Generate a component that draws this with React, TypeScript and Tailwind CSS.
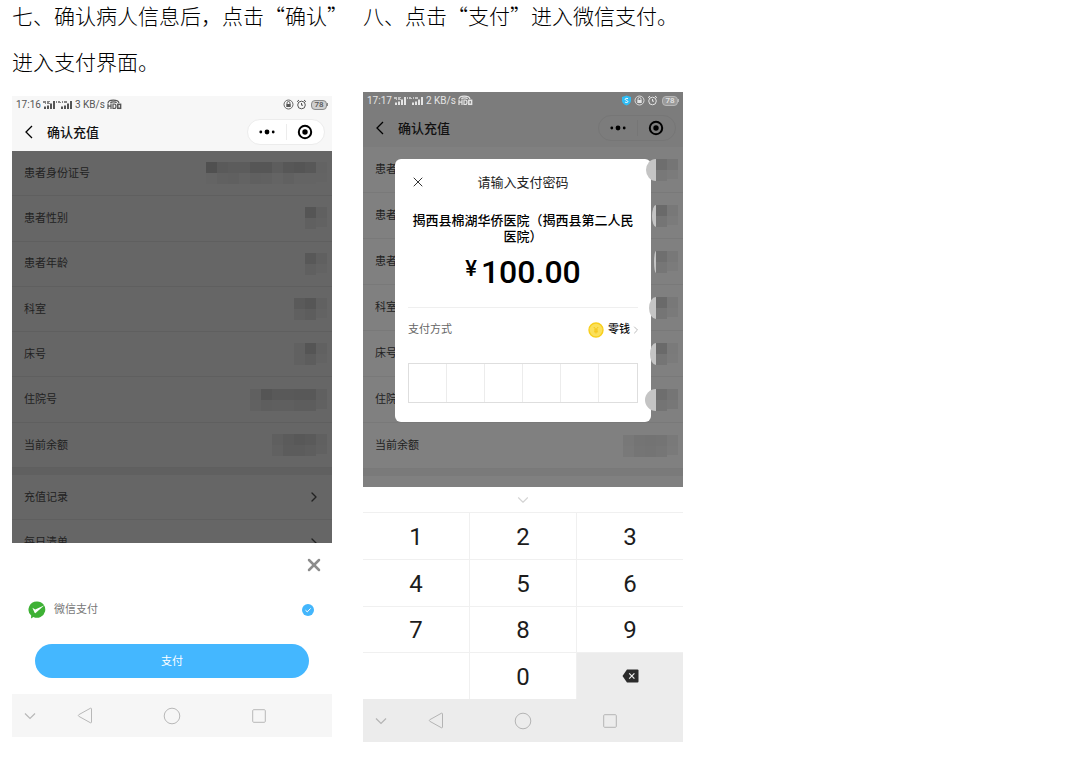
import { useState } from 'react';
import { ChevronDown, ChevronRight, X } from 'lucide-react';

interface MosaicProps {
  top: string[];
  bottom: string[];
  glow?: number;
}

interface InfoRow extends MosaicProps {
  label: string;
}

const CELL = 11;

// 患者信息打码块
function Mosaic({ top, bottom, glow = 0 }: MosaicProps) {
  const width = top.length * CELL + glow;
  return (
    <svg width={width} height={22} viewBox={`0 0 ${width} 22`} className="relative z-20 shrink-0" aria-hidden="true">
      {glow > 0 && <path d={`M${glow} 0 A${glow} 11 0 0 0 ${glow} 22 Z`} fill="#c4c4c4" />}
      {top.map((c, i) => (
        <rect key={`t${i}`} x={glow + i * CELL} y={0} width={CELL} height={11} fill={c} />
      ))}
      {bottom.map((c, i) => (
        <rect key={`b${i}`} x={glow + i * CELL} y={11} width={CELL} height={i === bottom.length - 1 ? 9 : 11} fill={c} />
      ))}
    </svg>
  );
}

const confirmRows: InfoRow[] = [
  {
    label: '患者身份证号',
    top: ['#505050', '#5a5a5a', '#5c5c5c', '#5c5c5c', '#565656', '#565656', '#5d5d5d', '#575757', '#555555', '#585858', '#636363'],
    bottom: ['#646464', '#616161', '#606060', '#636363', '#606060', '#616161', '#646464', '#616161', '#646464', '#646464', '#646464'],
  },
  { label: '患者性别', top: ['#555555', '#606060'], bottom: ['#606060', '#626262'] },
  { label: '患者年龄', top: ['#585858', '#606060'], bottom: ['#606060', '#636363'] },
  { label: '科室', top: ['#5a5a5a', '#565656', '#616161'], bottom: ['#606060', '#5d5d5d', '#636363'] },
  { label: '床号', top: ['#616161', '#555555', '#616161'], bottom: ['#616161', '#5d5d5d', '#636363'] },
  {
    label: '住院号',
    top: ['#606060', '#555555', '#595959', '#595959', '#585858', '#585858', '#606060'],
    bottom: ['#616161', '#5e5e5e', '#5f5f5f', '#5f5f5f', '#5d5d5d', '#5d5d5d', '#616161'],
  },
  {
    label: '当前余额',
    top: ['#5f5f5f', '#5b5b5b', '#585858', '#5a5a5a', '#606060'],
    bottom: ['#616161', '#5c5c5c', '#5c5c5c', '#5e5e5e', '#616161'],
  },
];

const payRows: InfoRow[] = [
  { label: '患者身份证号', glow: 10, top: ['#6e6e6e', '#757575'], bottom: ['#787878', '#7b7b7b'] },
  { label: '患者性别', glow: 4, top: ['#6a6a6a', '#787878'], bottom: ['#757575', '#7b7b7b'] },
  { label: '患者年龄', glow: 2, top: ['#6f6f6f', '#787878'], bottom: ['#767676', '#7b7b7b'] },
  { label: '科室', glow: 7, top: ['#6a6a6a', '#787878'], bottom: ['#757575', '#7a7a7a'] },
  { label: '床号', glow: 6, top: ['#6a6a6a', '#7a7a7a'], bottom: ['#757575', '#7b7b7b'] },
  { label: '住院号', glow: 11, top: ['#6e6e6e', '#757575'], bottom: ['#747474', '#777777'] },
  {
    label: '当前余额',
    top: ['#787878', '#747474', '#737373', '#747474', '#797979'],
    bottom: ['#797979', '#757575', '#747474', '#767676', '#7a7a7a'],
  },
];

function SignalBars() {
  return (
    <svg width="30" height="10" viewBox="0 0 30 10" fill="currentColor" aria-hidden="true">
      <path d="M0 1h3v3h-1v-1h-2zM4 1h3v1h-1v1h1v1h-3zM13 1h1v2h-1zM15 1h2v1h1v1h-3zM19 1h1v2h-1zM21 1h3v2h-3z" opacity=".7" />
      <path d="M1 6.500h2v2.500h-2zM4 5.500h2v3.500h-2zM7 3.500h2v5.500h-2zM10 1h2v8h-2z" />
      <path d="M18 6.500h2v2.500h-2zM21 5.500h2v3.500h-2zM24 3.500h2v5.500h-2zM27 1h2v8h-2z" />
    </svg>
  );
}

function HdIcon() {
  return (
    <svg width="15" height="11" viewBox="0 0 15 11" fill="none" stroke="currentColor" aria-hidden="true">
      <path d="M1 4C1.500 .2 11 .2 12 4M3.500 4C4 2.600 9 2.600 9.500 4" strokeWidth="1.200" />
      <path d="M1 4.500v5.500M4 4.500v5.500M1 7.200h3M6 5v4.500h1.200c2.400 0 2.400-4.500 0-4.500z" strokeWidth="1.200" />
      <rect x="10.800" y="5.300" width="2.800" height="4" strokeWidth="1.500" />
    </svg>
  );
}

function StatusBar({ time, speed, shield }: { time: string; speed: string; shield?: boolean }) {
  return (
    <div className="flex h-[17px] items-center justify-between px-1 text-[10px] leading-4">
      <div className="flex items-center gap-0.5">
        <span>{time}</span>
        <SignalBars />
        <span>{speed}</span>
        <HdIcon />
      </div>
      <div className="flex items-center gap-0.5">
        {shield && (
          <svg width="11" height="11" viewBox="0 0 11 11" aria-hidden="true">
            <path d="M5.500 .5L10 2v3.500c0 2.400-2 4-4.500 5C3 9.500 1 7.900 1 5.500V2z" fill="#2fbdf5" />
            <path d="M7 3.700C5.500 3 4 3.500 4.200 4.500S7 5.400 6.900 6.600 4.800 7.700 4 7" fill="none" stroke="#fff" />
          </svg>
        )}
        <svg width="11" height="11" viewBox="0 0 11 11" fill="none" stroke="currentColor" aria-hidden="true">
          <circle cx="5.500" cy="5.500" r="4.500" strokeWidth=".9" />
          <path d="M4 5V4a1.500 1.500 0 0 1 3 0v1" strokeWidth=".9" />
          <rect x="3.300" y="5" width="4.400" height="3" fill="currentColor" stroke="none" />
        </svg>
        <svg width="11" height="11" viewBox="0 0 11 11" fill="none" stroke="currentColor" aria-hidden="true">
          <circle cx="5.500" cy="6" r="3.800" />
          <path d="M5.500 4v2.200H7M1 2.800L3 1M10 2.800L8 1" />
        </svg>
        <span className="ml-0.5 flex items-center">
          <span
            className={
              shield
                ? 'flex h-2.5 w-4 items-center justify-center rounded-[4px] border border-[#b8b8b8] bg-[#9a9a9a] text-[8px] font-medium leading-none'
                : 'flex h-2.5 w-4 items-center justify-center rounded-[4px] border border-[#8a8a8a] bg-[#cfcfcf] text-[8px] font-medium leading-none'
            }
          >
            78
          </span>
          <span className={shield ? 'h-[3px] w-px bg-[#b8b8b8]' : 'h-[3px] w-px bg-[#8a8a8a]'} />
        </span>
      </div>
    </div>
  );
}

function NavHeader({ dim }: { dim?: boolean }) {
  return (
    <div className="flex h-[38px] items-center pl-3 pr-[7px] text-black">
      <button type="button" aria-label="返回" className="flex w-[23px] items-center">
        <svg width="10" height="14" viewBox="0 0 10 14" fill="none" stroke="currentColor" strokeWidth="1.300">
          <path d="M8 1L2 7l6 6" />
        </svg>
      </button>
      <h3 className="flex-1 pt-0.5 text-[13px] font-medium leading-5 text-[#111]">确认充值</h3>
      <div
        className={
          dim
            ? 'flex h-[26px] w-[78px] items-center rounded-full border border-[#767676]'
            : 'flex h-[26px] w-[78px] items-center rounded-full border border-[#ececec] bg-white'
        }
      >
        <button type="button" aria-label="更多" className="flex flex-1 justify-center">
          <svg width="16" height="6" viewBox="0 0 16 6" fill="currentColor">
            <circle cx="1.800" cy="3" r="1.400" />
            <circle cx="8" cy="3" r="2.400" />
            <circle cx="14.200" cy="3" r="1.400" />
          </svg>
        </button>
        <span className={dim ? 'h-4 w-px bg-[#767676]' : 'h-4 w-px bg-[#ececec]'} />
        <button type="button" aria-label="关闭小程序" className="flex flex-1 justify-center">
          <svg width="16" height="16" viewBox="0 0 16 16" fill="none" stroke="currentColor" strokeWidth="2">
            <circle cx="8" cy="8" r="6.200" />
            <circle cx="8" cy="8" r="2.700" fill="currentColor" stroke="none" />
          </svg>
        </button>
      </div>
    </div>
  );
}

function SystemNav({ dark }: { dark?: boolean }) {
  return (
    <div
      className={
        dark
          ? 'grid h-[43px] grid-cols-[36px_74px_100px_74px] place-items-center bg-[#ececec] text-[#b4b4b4]'
          : 'grid h-[43px] grid-cols-[36px_74px_100px_74px] place-items-center bg-[#f6f6f6] text-[#b8b8b8]'
      }
    >
      <button type="button" aria-label="收起">
        <svg width="12" height="8" viewBox="0 0 12 8" fill="none" stroke="currentColor" strokeWidth="1.200">
          <path d="M1 1.500l5 5 5-5" />
        </svg>
      </button>
      <button type="button" aria-label="返回">
        <svg width="16" height="17" viewBox="0 0 16 17" fill="none" stroke="currentColor">
          <path d="M13.500 1.200L1.800 7.700q-1 .8 0 1.600L13.500 15.800q1 .2 1-.8V2q0-1-1-.8z" />
        </svg>
      </button>
      <button type="button" aria-label="主页">
        <svg width="18" height="18" viewBox="0 0 18 18" fill="none" stroke="currentColor">
          <circle cx="9" cy="9" r="7.800" />
        </svg>
      </button>
      <button type="button" aria-label="最近任务">
        <svg width="14" height="14" viewBox="0 0 14 14" fill="none" stroke="currentColor">
          <rect x=".7" y=".7" width="12.600" height="12.600" rx="1" />
        </svg>
      </button>
    </div>
  );
}

function ConfirmPhone() {
  return (
    <div className="bg-white">
      <div className="bg-[#f7f7f7] text-[#555]">
        <StatusBar time="17:16" speed="3 KB/s" />
        <NavHeader />
      </div>

      <div className="bg-[#666] text-[11px] text-[#222]">
        <ul className="flex h-[317px] flex-col">
          {confirmRows.map((row) => (
            <li key={row.label} className="flex flex-1 items-center justify-between border-b border-[#5f5f5f] pl-3 pr-[5px]">
              <span className="pt-0.5">{row.label}</span>
              <Mosaic top={row.top} bottom={row.bottom} />
            </li>
          ))}
        </ul>
        <div className="h-[7px] bg-[#606060]" />
        <a href="#records" className="flex h-[45px] items-center justify-between border-b border-[#5f5f5f] pl-3 pr-2.5">
          <span className="pt-0.5">充值记录</span>
          <ChevronRight size={16} strokeWidth={2} />
        </a>
        {/* 被支付面板遮住一半 */}
        <div className="h-[23px] overflow-hidden">
          <a href="#daily" className="flex h-[45px] items-center justify-between pl-3 pr-2.5">
            <span className="pt-0.5">每日清单</span>
            <ChevronRight size={16} strokeWidth={2} />
          </a>
        </div>
      </div>

      {/* 支付面板 */}
      <div className="bg-white pb-4">
        <div className="flex h-[43px] items-center justify-end pr-2">
          <button type="button" aria-label="关闭" className="text-[#8c8c8c]">
            <X size={20} strokeWidth={3} />
          </button>
        </div>
        <label className="flex h-[47px] items-center gap-2 pl-4 pr-[18px] text-[11px] text-[#777]">
          <svg width="18" height="18" viewBox="0 0 18 18" aria-hidden="true">
            <path d="M9.200 .4a8.300 8.200 0 1 1-3.800 15.600L3 17.600 3.200 14.600A8.300 8.200 0 0 1 9.200 .4z" fill="#3eb135" />
            <path d="M4.400 6.700l2.800 1.700L16.400 4.300 7.600 12q-.7.500-1-.3z" fill="#fff" />
          </svg>
          <span className="flex-1 pt-0.5">微信支付</span>
          <input type="radio" name="pay" defaultChecked className="sr-only" />
          <svg width="12" height="12" viewBox="0 0 12 12" fill="none" aria-hidden="true">
            <circle cx="6" cy="6" r="6" fill="#43b6fc" />
            <path d="M3.500 6.200l1.800 1.700 3.300-3.500" stroke="#fff" />
          </svg>
        </label>
        <div className="px-[23px] pt-[11px]">
          <button type="button" className="h-[34px] w-full rounded-full bg-[#44b7ff] pt-0.5 text-[11px] text-white">
            支付
          </button>
        </div>
      </div>
      <SystemNav />
    </div>
  );
}

function PasswordModal() {
  return (
    <div className="absolute inset-x-8 top-[67px] z-10 rounded-md bg-white px-[13px] pb-[19px] text-black">
      <div className="grid h-[46px] grid-cols-[20px_1fr_20px] items-center">
        <button type="button" aria-label="关闭" className="flex justify-center text-[#333]">
          <X size={16} strokeWidth={1.5} />
        </button>
        <h4 className="pt-0.5 text-center text-[13px] leading-5 text-[#222]">请输入支付密码</h4>
      </div>
      <p className="pt-2 text-center text-[13px] font-medium leading-4">揭西县棉湖华侨医院（揭西县第二人民医院）</p>
      <p className="flex h-[63px] items-center justify-center gap-1 border-b border-[#efefef] pb-2 font-medium">
        <span className="pb-1.5 text-[22px] leading-none">¥</span>
        <span className="text-[32px] leading-none">100.00</span>
      </p>
      <div className="flex h-[43px] items-center text-[11px]">
        <span className="flex-1 pt-0.5 text-[#666]">支付方式</span>
        <button type="button" className="flex items-center gap-1 font-medium text-[#111]">
          <svg width="16" height="16" viewBox="0 0 16 16" fill="none" aria-hidden="true">
            <circle cx="8" cy="8" r="7" fill="#fbe05a" stroke="#f8cf1c" strokeWidth="1.400" />
            <path d="M5.800 5L8 7.500 10.200 5M8 7.500V11.500M6 8h4M6 9.800h4" stroke="#f5c518" />
          </svg>
          <span className="pt-0.5">零钱</span>
          <ChevronRight size={12} strokeWidth={2} className="-mx-1 text-[#bbb]" />
        </button>
      </div>
      <div className="mt-3 grid h-10 grid-cols-6 divide-x divide-[#ececec] border border-[#dedede]">
        {[1, 2, 3, 4, 5, 6].map((n) => (
          <input key={n} type="password" maxLength={1} aria-label={`密码第${n}位`} className="w-full min-w-0 text-center outline-none" />
        ))}
      </div>
    </div>
  );
}

function Keypad() {
  const [, setCode] = useState('');
  const keys = ['1', '2', '3', '4', '5', '6', '7', '8', '9', '', '0'];

  return (
    <div className="bg-white">
      <button type="button" aria-label="收起键盘" className="flex h-[25px] w-full items-center justify-center text-[#d4d4d4]">
        <ChevronDown size={18} strokeWidth={1.5} />
      </button>
      <div className="grid h-[187px] grid-cols-3 grid-rows-4 gap-px bg-[#f0f0f0] pt-px text-2xl text-[#1c1c1c]">
        {keys.map((key) =>
          key ? (
            <button key={key} type="button" onClick={() => setCode((c) => c + key)} className="bg-white pt-0.5">
              {key}
            </button>
          ) : (
            <span key="blank" className="bg-white" />
          )
        )}
        <button
          type="button"
          aria-label="删除"
          onClick={() => setCode((c) => c.slice(0, -1))}
          className="flex items-center justify-center bg-[#ececec]"
        >
          <svg width="17" height="14" viewBox="0 0 17 14" fill="none">
            <path d="M5 .5h10.500q1 0 1 1v11q0 1-1 1H5L.5 7z" fill="#2b2b2b" />
            <path d="M7.200 4.300l5.200 5.400M12.400 4.300L7.200 9.700" stroke="#eee" strokeWidth="1.200" />
          </svg>
        </button>
      </div>
    </div>
  );
}

function PasswordPhone() {
  return (
    <div className="relative">
      <div className="bg-[#7c7c7c] text-[#e4e4e4]">
        <StatusBar time="17:17" speed="2 KB/s" shield />
        <NavHeader dim />
      </div>
      <div className="bg-[#808080] pb-[11px] text-[11px] text-[#222]">
        <ul className="flex h-[322px] flex-col">
          {payRows.map((row) => (
            <li key={row.label} className="flex flex-1 items-center justify-between border-b border-[#797979] pl-3 pr-[5px]">
              <span className="pt-0.5">{row.label}</span>
              <Mosaic top={row.top} bottom={row.bottom} glow={row.glow} />
            </li>
          ))}
        </ul>
        <div className="h-[7px] bg-[#7a7a7a]" />
      </div>
      <PasswordModal />
      <Keypad />
      <SystemNav dark />
    </div>
  );
}

export default function App() {
  return (
    <main className="flex min-h-screen gap-[31px] bg-white px-3 pb-5 font-[Roboto,'Noto_Sans_CJK_SC',sans-serif]" lang="zh-CN">
      <section className="min-w-0 max-w-80 flex-1">
        <h2 className="mb-5 whitespace-nowrap font-['Noto_Sans_CJK_SC',serif] text-[21px] font-light leading-[30px] text-black">
          <span className="mb-4 block">七、确认病人信息后，点击“确认”</span>
          <span className="block">进入支付界面。</span>
        </h2>
        <ConfirmPhone />
      </section>
      <section className="min-w-0 max-w-80 flex-1">
        <h2 className="mb-[62px] whitespace-nowrap font-['Noto_Sans_CJK_SC',serif] text-[21px] font-light leading-[30px] text-black">
          八、点击“支付”进入微信支付。
        </h2>
        <PasswordPhone />
      </section>
    </main>
  );
}
